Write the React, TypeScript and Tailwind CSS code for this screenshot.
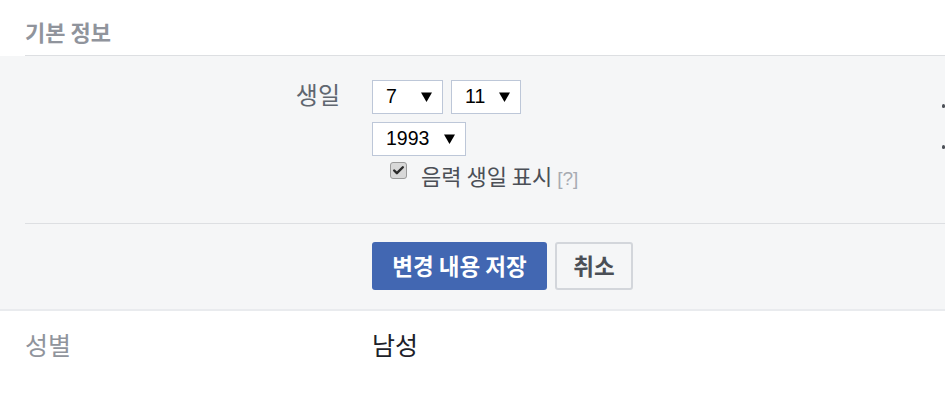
import { Check } from 'lucide-react';

const kr = "font-['Noto_Sans_CJK_KR','Noto_Sans',sans-serif]";

const Select = ({ value, width }: { value: string; width: string }) => (
  <div
    className={`${width} h-[34px] flex items-center justify-between pl-[13px] pr-[10px] bg-white border border-[#bdc7d8] font-['Liberation_Sans',Arial,sans-serif] text-[19.5px] text-black`}
  >
    <span>{value}</span>
    <svg width="11" height="10" viewBox="0 0 11 10" className="fill-black">
      <path d="M0 0.5h11L5.5 10z" />
    </svg>
  </div>
);

const App = () => {
  return (
    <div className={`w-[945px] h-[405px] bg-white overflow-hidden ${kr}`}>
      {/* header */}
      <div className="ml-[25px] h-[56px] flex items-center pt-[6px] border-b border-[#dddfe2]">
        <h2 className="text-[22px] font-bold text-[#90949c] leading-none">기본 정보</h2>
      </div>

      {/* edit panel */}
      <div className="bg-[#f5f6f7] border-b-2 border-[#e9ebee]">
        <div className="grid grid-cols-[340px_1fr_3px] gap-x-8 pt-[24px]">
          <div className="text-right text-[24px] leading-[28px] text-[#606770]">생일</div>
          <div>
            <div className="flex gap-2">
              <Select value="7" width="w-[71px]" />
              <Select value="11" width="w-[70px]" />
            </div>
            <div className="flex mt-2">
              <Select value="1993" width="w-[94px]" />
            </div>
            <div className="flex items-start mt-[6px] ml-[18px]">
              <span className="w-[17px] h-[17px] rounded-[3px] border border-[#9a9a9a] bg-[#d8d8d8] flex items-center justify-center">
                <Check className="w-[13px] h-[13px] text-[#2b2b2b]" strokeWidth={4.5} />
              </span>
              <span className="ml-[14px] text-[22px] leading-[26px] text-[#4b4f56]">
                음력 생일 표시{' '}
                <span className="font-['Liberation_Sans',Arial,sans-serif] text-[19px] text-[#a7abb2]">[?]</span>
              </span>
            </div>
          </div>
          <div className="flex flex-col gap-[37px] pt-[24px]">
            <span className="w-[3px] h-[4px] bg-[#4b4f56] rounded-full" />
            <span className="w-[3px] h-[4px] bg-[#4b4f56] rounded-full" />
          </div>
        </div>

        <div className="ml-[25px] mt-[31px] border-t border-[#dddfe2]" />

        <div className="grid grid-cols-[340px_1fr] gap-x-8 pt-[18px] pb-[19px]">
          <div />
          <div className="flex gap-2">
            <button className="h-[48px] w-[175px] rounded-[3px] bg-[#4267b2] text-white text-[22.5px] font-bold">
              변경 내용 저장
            </button>
            <button className="h-[48px] w-[78px] rounded-[3px] bg-[#f5f6f7] border-2 border-[#d3d6db] text-[#4b4f56] text-[22.5px] font-bold">
              취소
            </button>
          </div>
        </div>
      </div>

      {/* gender row */}
      <div className="grid grid-cols-[340px_1fr] gap-x-8 pt-[16px]">
        <div className="pl-[25px] text-[25px] leading-[34px] text-[#90949c]">성별</div>
        <div className="text-[25px] leading-[34px] text-[#1d2129]">남성</div>
      </div>
    </div>
  );
};

export default App;
